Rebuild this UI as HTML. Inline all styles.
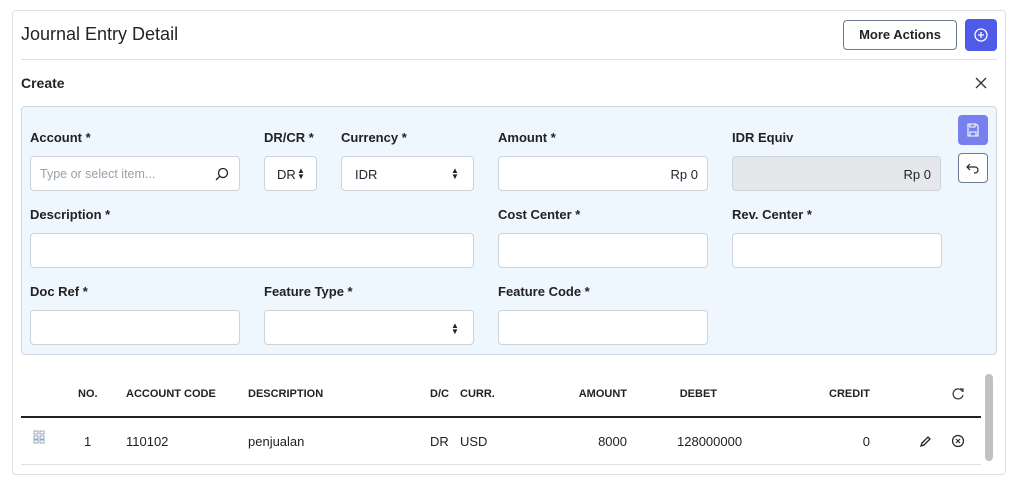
<!DOCTYPE html>
<html><head><style>
*{box-sizing:border-box;margin:0;padding:0}
body{width:1020px;height:493px;background:#fff;font-family:"Liberation Sans",sans-serif;color:#1f2328;position:relative;overflow:hidden}
.a{position:absolute}
.card{left:12px;top:10px;width:994px;height:465px;border:1px solid #dde1e6;border-radius:4px}
.lbl{font-size:13px;font-weight:bold;color:#222}
.inp{position:absolute;height:35px;background:#fff;border:1px solid #cdd3da;border-radius:4px;font-size:13px}
.th{font-size:11px;font-weight:bold;top:388px;color:#222}
.td{font-size:13px;top:434px;color:#222}
.ar{font-size:8px;line-height:6px;color:#222}
</style></head><body>
<div class="a card"></div>
<div class="a" style="left:21px;top:24px;font-size:18px">Journal Entry Detail</div>
<div class="a" style="left:843px;top:20px;width:114px;height:30px;border:1px solid #6b7a90;border-radius:4px;font-size:13px;font-weight:bold;text-align:center;line-height:28px">More Actions</div>
<div class="a" style="left:965px;top:19px;width:32px;height:32px;background:#4f5be8;border-radius:4px">
<svg width="32" height="32"><circle cx="16" cy="16" r="6" fill="none" stroke="#fff" stroke-width="1.3"/><path d="M16 13v6M13 16h6" stroke="#fff" stroke-width="1.3"/></svg></div>
<div class="a" style="left:21px;top:59px;width:976px;height:1px;background:#dde1e6"></div>
<div class="a" style="left:21px;top:75px;font-size:14px;font-weight:bold">Create</div>
<svg class="a" style="left:974px;top:76px" width="14" height="14"><path d="M2 2L12 12M12 2L2 12" stroke="#333" stroke-width="1.3"/></svg>
<div class="a" style="left:21px;top:106px;width:976px;height:249px;background:#eef6fe;border:1px solid #cfd8e3;border-radius:4px"></div>
<div class="a lbl" style="left:30px;top:130px">Account *</div>
<div class="a lbl" style="left:264px;top:130px">DR/CR *</div>
<div class="a lbl" style="left:341px;top:130px">Currency *</div>
<div class="a lbl" style="left:498px;top:130px">Amount *</div>
<div class="a lbl" style="left:732px;top:130px">IDR Equiv</div>
<div class="inp" style="left:30px;top:156px;width:210px;color:#9aa1aa;padding:10px 0 0 9px;font-size:12.5px">Type or select item...
<svg class="a" style="left:183px;top:9px" width="16" height="16"><circle cx="9" cy="7" r="4.5" fill="none" stroke="#222" stroke-width="1.3"/><path d="M5.8 10.2L2 14" stroke="#222" stroke-width="1.3"/></svg></div>
<div class="inp" style="left:264px;top:156px;width:53px;padding:10px 0 0 12px">DR<span class="a ar" style="left:32px;top:11px">▲<br>▼</span></div>
<div class="inp" style="left:341px;top:156px;width:133px;padding:10px 0 0 13px">IDR<span class="a ar" style="left:109px;top:11px">▲<br>▼</span></div>
<div class="inp" style="left:498px;top:156px;width:210px;text-align:right;padding:10px 9px 0 0">Rp 0</div>
<div class="inp" style="left:732px;top:156px;width:209px;background:#e5e7eb;text-align:right;padding:10px 9px 0 0">Rp 0</div>
<div class="a" style="left:958px;top:115px;width:30px;height:30px;background:#7880f0;border-radius:4px">
<svg width="30" height="30"><path d="M10 9h8l2 2v10h-10z M12 9v3h5v-3 M12 21v-4h6v4" fill="none" stroke="#fff" stroke-width="1.1"/></svg></div>
<div class="a" style="left:958px;top:153px;width:30px;height:30px;border:1px solid #6b7a90;border-radius:4px;background:#fff">
<svg width="28" height="28"><path d="M11 10l-3 3 3 3M8 13h8a3 3 0 0 1 0 6h-1" fill="none" stroke="#222" stroke-width="1.2"/></svg></div>
<div class="a lbl" style="left:30px;top:207px">Description *</div>
<div class="a lbl" style="left:498px;top:207px">Cost Center *</div>
<div class="a lbl" style="left:732px;top:207px">Rev. Center *</div>
<div class="inp" style="left:30px;top:233px;width:444px"></div>
<div class="inp" style="left:498px;top:233px;width:210px"></div>
<div class="inp" style="left:732px;top:233px;width:210px"></div>
<div class="a lbl" style="left:30px;top:284px">Doc Ref *</div>
<div class="a lbl" style="left:264px;top:284px">Feature Type *</div>
<div class="a lbl" style="left:498px;top:284px">Feature Code *</div>
<div class="inp" style="left:30px;top:310px;width:210px"></div>
<div class="inp" style="left:264px;top:310px;width:210px"><span class="a ar" style="left:186px;top:12px">▲<br>▼</span></div>
<div class="inp" style="left:498px;top:310px;width:210px"></div>
<div class="a th" style="left:78px">NO.</div>
<div class="a th" style="left:126px">ACCOUNT CODE</div>
<div class="a th" style="left:248px">DESCRIPTION</div>
<div class="a th" style="left:430px">D/C</div>
<div class="a th" style="left:460px">CURR.</div>
<div class="a th" style="left:560px;width:67px;text-align:right">AMOUNT</div>
<div class="a th" style="left:650px;width:67px;text-align:right">DEBET</div>
<div class="a th" style="left:800px;width:70px;text-align:right">CREDIT</div>
<svg class="a" style="left:951px;top:387px" width="14" height="14"><path d="M11.5 4.5A5 5 0 1 0 12 8" fill="none" stroke="#333" stroke-width="1.2"/><path d="M9 2h3v3" fill="none" stroke="#333" stroke-width="1.2"/></svg>
<div class="a" style="left:21px;top:416px;width:960px;height:2px;background:#222"></div>
<svg class="a" style="left:33px;top:430px" width="12" height="14"><g fill="none" stroke="#9aa8bb" stroke-width="1"><rect x="1" y="1" width="4" height="3"/><rect x="7" y="1" width="4" height="3"/><rect x="1" y="6" width="4" height="3"/><rect x="7" y="6" width="4" height="3"/><rect x="1" y="10" width="4" height="3"/><rect x="7" y="10" width="4" height="3"/></g></svg>
<div class="a td" style="left:84px">1</div>
<div class="a td" style="left:126px">110102</div>
<div class="a td" style="left:248px">penjualan</div>
<div class="a td" style="left:430px">DR</div>
<div class="a td" style="left:460px">USD</div>
<div class="a td" style="left:560px;width:67px;text-align:right">8000</div>
<div class="a td" style="left:677px">128000000</div>
<div class="a td" style="left:800px;width:70px;text-align:right">0</div>
<svg class="a" style="left:918px;top:434px" width="14" height="14"><path d="M3 12l1-3 6-6 2 2-6 6z" fill="none" stroke="#222" stroke-width="1.3"/></svg>
<svg class="a" style="left:951px;top:434px" width="14" height="14"><circle cx="7" cy="7" r="5.5" fill="none" stroke="#222" stroke-width="1.2"/><path d="M5 5l4 4M9 5l-4 4" stroke="#222" stroke-width="1.1"/></svg>
<div class="a" style="left:21px;top:464px;width:960px;height:1px;background:#dde1e6"></div>
<div class="a" style="left:985px;top:374px;width:8px;height:87px;background:#c1c1c1;border-radius:4px"></div>
</body></html>
